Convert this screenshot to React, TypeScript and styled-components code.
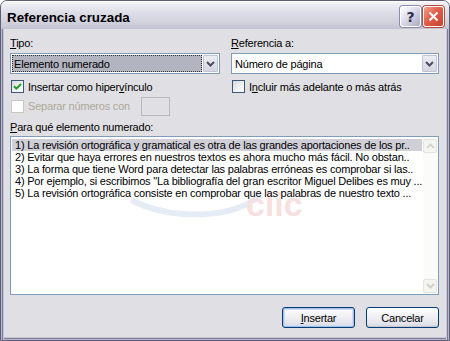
import React from 'react';
import styled, { createGlobalStyle } from 'styled-components';

const Global = createGlobalStyle`
  html, body { margin: 0; padding: 0; background: #ffffff; }
  body { font-family: "Liberation Sans", Arial, sans-serif; font-size: 11px; color: #000; letter-spacing: -0.2px; }
  * { box-sizing: border-box; }
`;

const Window = styled.div`
  width: 450px;
  height: 341px;
  display: flex;
  flex-direction: column;
  border: 1px solid #5e5e7a;
  border-radius: 7px 7px 0 0;
  background: #e0dfe3;
  overflow: hidden;
`;

const TitleBar = styled.div`
  height: 28px;
  flex: none;
  display: flex;
  align-items: center;
  padding: 1px 5px 0 6px;
  background: linear-gradient(#ffffff 0%, #eeeef4 10%, #dcdce6 45%, #d2d2de 75%, #c2c2d2 100%);
`;

const Title = styled.div`
  flex: 1;
  font-family: "Liberation Sans", Arial, sans-serif;
  font-weight: bold;
  font-size: 13.4px;
  letter-spacing: 0;
  color: #000;
  padding-top: 3px;
`;

const CaptionButtons = styled.div`
  display: flex;
  gap: 2px;
  padding-top: 2px;
`;

const CaptionButton = styled.div<{ $close?: boolean }>`
  width: 21px;
  height: 21px;
  border-radius: 3px;
  display: flex;
  align-items: center;
  justify-content: center;
  border: 1px solid #ffffff;
  box-shadow: 0 0 0 1px ${p => (p.$close ? '#b84a3c' : '#8e8eaa')};
  background: ${p =>
    p.$close
      ? 'linear-gradient(135deg, #f0a08c 0%, #e0604c 45%, #c8402e 100%)'
      : 'linear-gradient(135deg, #ffffff 0%, #dcdcea 45%, #a8a8c4 100%)'};
  color: ${p => (p.$close ? '#ffffff' : '#2e2e48')};
  font-weight: bold;
  font-size: 14px;
  letter-spacing: 0;
  font-family: "DejaVu Sans", sans-serif;
`;

const Body = styled.div`
  flex: 1;
  display: flex;
  flex-direction: column;
  padding: 8px 10px 12px 9px;
  box-shadow:
    inset 1px 0 0 #b6b6ca, inset 2px 0 0 #7e7e9c, inset 3px 0 0 #c6c6d4,
    inset -1px 0 0 #b6b6ca, inset -2px 0 0 #7e7e9c, inset -3px 0 0 #c6c6d4,
    inset 0 -1px 0 #b6b6ca, inset 0 -2px 0 #7e7e9c, inset 0 -3px 0 #c6c6d4;
  position: relative;
`;

const TopGrid = styled.div`
  display: grid;
  grid-template-columns: 210px 208px;
  column-gap: 11px;
`;

const Column = styled.div`
  display: flex;
  flex-direction: column;
`;

const Label = styled.div<{ $disabled?: boolean; $mt?: number }>`
  height: 13px;
  line-height: 13px;
  white-space: nowrap;
  margin-top: ${p => p.$mt ?? 0}px;
  color: ${p => (p.$disabled ? '#aca899' : '#000')};
`;

const Combo = styled.div`
  margin-top: 3px;
  height: 21px;
  border: 1px solid #7f9db9;
  background: #ffffff;
  display: flex;
  align-items: stretch;
  padding: 1px;
`;

const ComboValue = styled.div<{ $selected?: boolean }>`
  flex: 1;
  display: flex;
  align-items: center;
  padding-left: 2px;
  margin-right: 1px;
  white-space: nowrap;
  background: ${p => (p.$selected ? '#b2b4bf' : 'transparent')};
  outline: ${p => (p.$selected ? '1px dotted #303030' : 'none')};
  outline-offset: -1px;
`;

const ComboButton = styled.div`
  width: 15px;
  border: 1px solid #c2c2d4;
  border-radius: 1px;
  background: linear-gradient(#ececf4, #d6d6e2);
  display: flex;
  align-items: center;
  justify-content: center;
`;

const CheckRow = styled.label<{ $mt: number; $h?: number }>`
  display: flex;
  align-items: center;
  margin-top: ${p => p.$mt}px;
  height: ${p => p.$h ?? 13}px;
  padding-left: 1px;
  gap: 4px;
`;

const Box = styled.span<{ $disabled?: boolean }>`
  width: 13px;
  height: 13px;
  flex: none;
  border: 1px solid ${p => (p.$disabled ? '#cac8bb' : '#3a5878')};
  background: ${p => (p.$disabled ? '#ffffff' : 'linear-gradient(135deg, #d8d8dc 0%, #f4f4f4 60%, #ffffff 100%)')};
  display: flex;
  align-items: center;
  justify-content: center;
`;

const SmallInput = styled.span`
  width: 29px;
  height: 19px;
  margin-left: 7px;
  border: 1px solid #b8b8c0;
  background: #e0dfe3;
`;

const U = styled.span`
  text-decoration: underline;
`;

const ListBox = styled.div`
  margin-top: 2px;
  height: 159px;
  border: 1px solid #7f9db9;
  background: #ffffff;
  display: flex;
  position: relative;
  overflow: hidden;
`;

const Rows = styled.div`
  flex: 1;
  padding: 2px 1px 0 1px;
  min-width: 0;
  position: relative;
  z-index: 1;
`;

const Row = styled.div<{ $selected?: boolean }>`
  height: 12px;
  line-height: 12px;
  padding-left: 3px;
  white-space: nowrap;
  overflow: hidden;
  background: ${p => (p.$selected ? '#d0cfd8' : 'transparent')};
`;

const ScrollBar = styled.div`
  width: 15px;
  flex: none;
  background: #fbfbf9;
  display: flex;
  flex-direction: column;
  justify-content: space-between;
  padding: 2px 1px 1px 0;
  position: relative;
  z-index: 1;
`;

const ScrollButton = styled.div`
  height: 14px;
  border: 1px solid #e4e4de;
  border-radius: 2px;
  background: #f4f4f0;
  display: flex;
  align-items: center;
  justify-content: center;
`;

const Watermark = styled.div`
  position: absolute;
  left: 100px;
  top: 8px;
  width: 220px;
  height: 80px;
  z-index: 0;
  pointer-events: none;
`;

const WatermarkText = styled.span`
  position: absolute;
  left: 135px;
  top: 42px;
  font-family: "Liberation Sans", Arial, sans-serif;
  font-weight: bold;
  font-size: 34px;
  line-height: 34px;
  letter-spacing: 0;
  color: #f8e0e0;
`;

const ButtonRow = styled.div`
  margin-top: 12px;
  display: flex;
  justify-content: flex-end;
  gap: 11px;
`;

const Button = styled.button<{ $default?: boolean }>`
  width: 73px;
  height: 21px;
  padding: 0;
  font-family: "Liberation Sans", Arial, sans-serif;
  font-size: 11px;
  letter-spacing: -0.2px;
  color: #000;
  border: 1px solid #003c74;
  border-radius: 3px;
  background: linear-gradient(#ffffff 0%, #f2f2f6 40%, #e2e2ea 85%, #d2d2dc 100%);
  box-shadow: ${p =>
    p.$default
      ? 'inset 0 0 0 1px #a8c0e8, inset 0 0 0 2px #cddcf4'
      : 'inset 0 -1px 0 #c8c8d4'};
`;

const Chevron = ({ color }: { color: string }) => (
  <svg width="9" height="6" viewBox="0 0 9 6">
    <path d="M1 1 L4.5 4.5 L8 1" fill="none" stroke={color} strokeWidth="2" />
  </svg>
);

const ChevronUp = ({ color }: { color: string }) => (
  <svg width="9" height="6" viewBox="0 0 9 6">
    <path d="M1 5 L4.5 1.5 L8 5" fill="none" stroke={color} strokeWidth="1.6" />
  </svg>
);

const Check = () => (
  <svg width="9" height="9" viewBox="0 0 9 9">
    <path d="M1 4.2 L3.4 6.6 L8 2" fill="none" stroke="#21a121" strokeWidth="2" />
  </svg>
);

const items = [
  '1) La revisión ortográfica y gramatical es otra de las grandes aportaciones de los pr..',
  '2) Evitar que haya errores en nuestros textos es ahora mucho más fácil. No obstan..',
  '3) La forma que tiene Word para detectar las palabras erróneas es comprobar si las..',
  '4) Por ejemplo, si escribimos "La bibliografía del gran escritor Miguel Delibes es muy ...',
  '5) La revisión ortográfica consiste en comprobar que las palabras de nuestro texto ...',
];

export default function App() {
  return (
    <>
      <Global />
      <Window>
        <TitleBar>
          <Title>Referencia cruzada</Title>
          <CaptionButtons>
            <CaptionButton>?</CaptionButton>
            <CaptionButton $close>
              <svg width="11" height="11" viewBox="0 0 11 11">
                <path d="M1.5 1.5 L9.5 9.5 M9.5 1.5 L1.5 9.5" stroke="#ffffff" strokeWidth="2" />
              </svg>
            </CaptionButton>
          </CaptionButtons>
        </TitleBar>
        <Body>
          <TopGrid>
            <Column>
              <Label><U>T</U>ipo:</Label>
              <Combo>
                <ComboValue $selected>Elemento numerado</ComboValue>
                <ComboButton><Chevron color="#4d4d6a" /></ComboButton>
              </Combo>
              <CheckRow $mt={6}>
                <Box><Check /></Box>
                <span>Insertar como hiper<U>v</U>ínculo</span>
              </CheckRow>
              <CheckRow $mt={4} $h={19}>
                <Box $disabled />
                <Label $disabled>Separar números con</Label>
                <SmallInput />
              </CheckRow>
            </Column>
            <Column>
              <Label><U>R</U>eferencia a:</Label>
              <Combo>
                <ComboValue>Número de página</ComboValue>
                <ComboButton><Chevron color="#4d4d6a" /></ComboButton>
              </Combo>
              <CheckRow $mt={6}>
                <Box />
                <span>I<U>n</U>cluir más adelante o más atrás</span>
              </CheckRow>
            </Column>
          </TopGrid>
          <Label $mt={5}><U>P</U>ara qué elemento numerado:</Label>
          <ListBox>
            <Watermark>
              <svg width="220" height="80" viewBox="0 0 220 80">
                <path d="M20 55 C 60 75, 120 75, 150 50" fill="none" stroke="#e6ecf6" strokeWidth="6" />
              </svg>
              <WatermarkText>clic</WatermarkText>
            </Watermark>
            <Rows>
              {items.map((t, i) => (
                <Row key={i} $selected={i === 0}>{t}</Row>
              ))}
            </Rows>
            <ScrollBar>
              <ScrollButton><ChevronUp color="#d0d0c8" /></ScrollButton>
              <ScrollButton><Chevron color="#d0d0c8" /></ScrollButton>
            </ScrollBar>
          </ListBox>
          <ButtonRow>
            <Button $default><U>I</U>nsertar</Button>
            <Button>Cancelar</Button>
          </ButtonRow>
        </Body>
      </Window>
    </>
  );
}
